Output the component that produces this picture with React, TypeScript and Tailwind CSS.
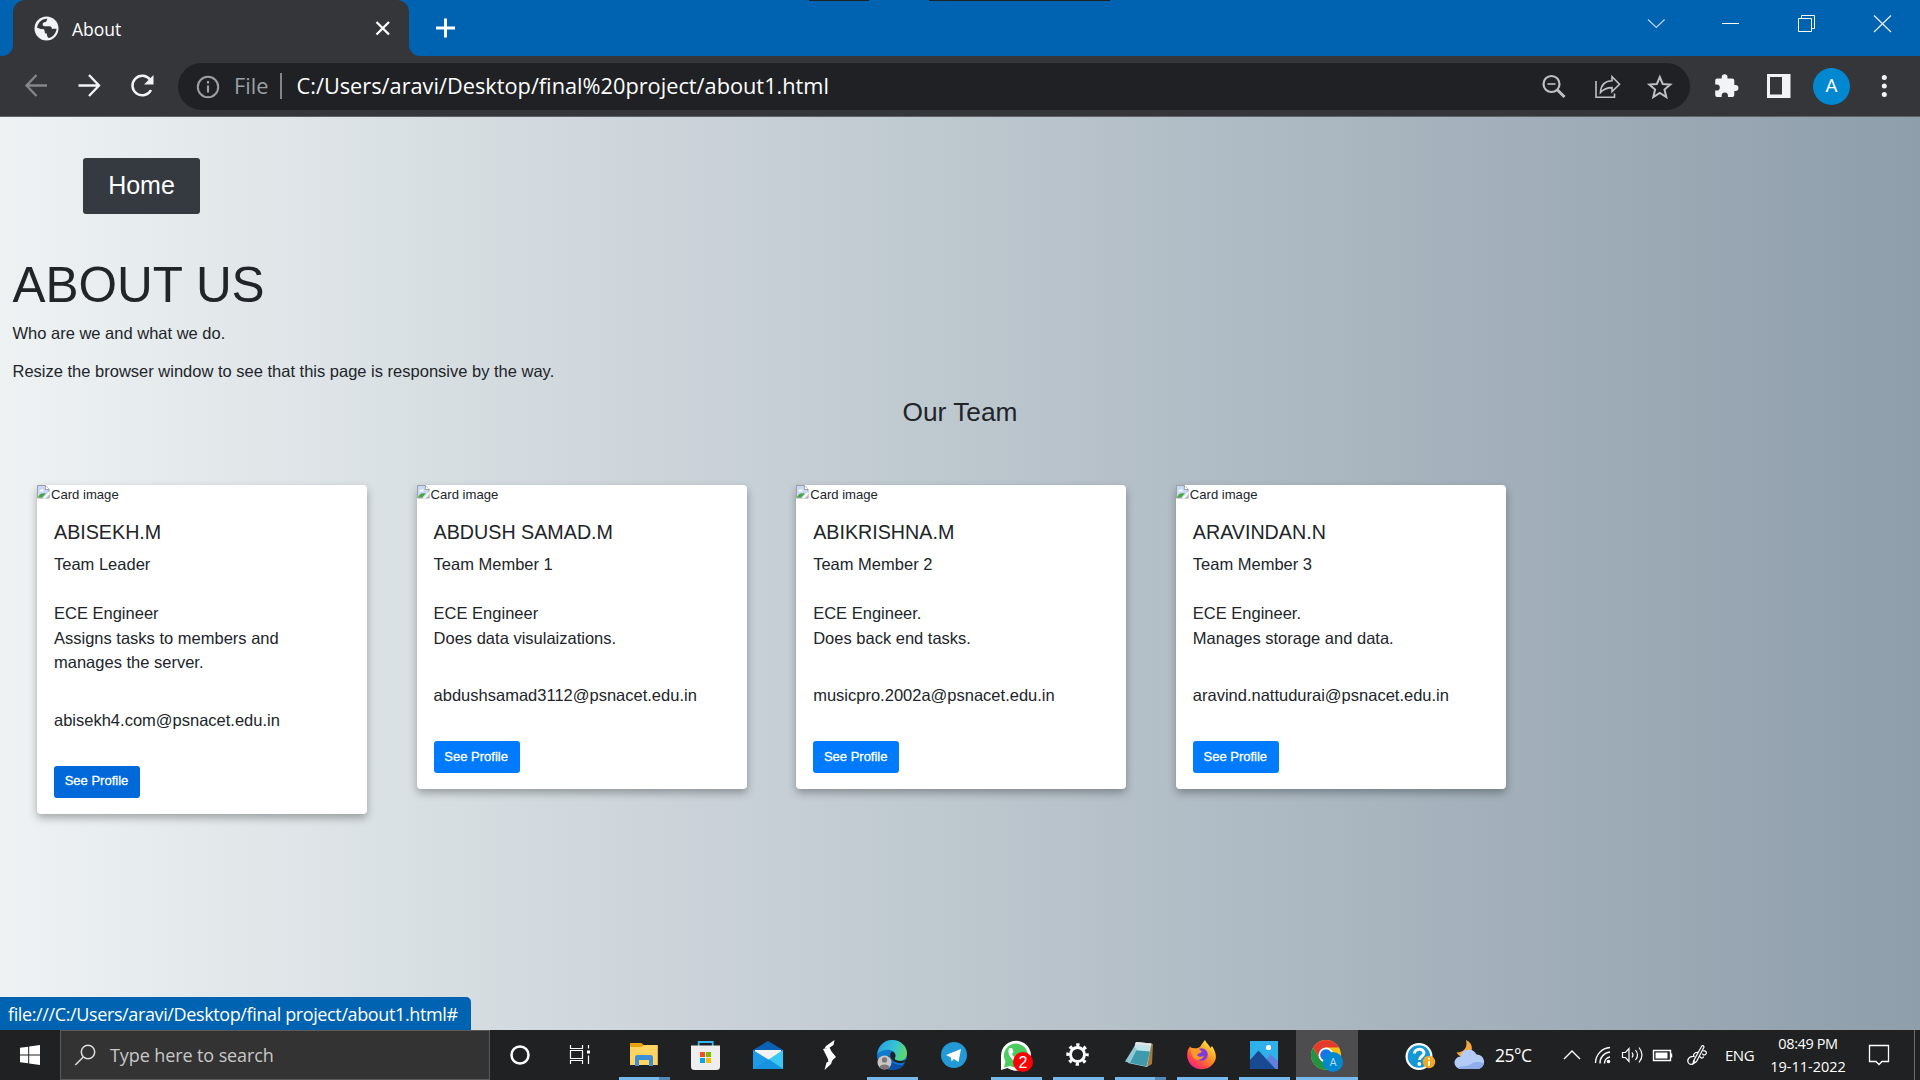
import React from "react";

type DrawProps = { x: number; y: number; w: number; h: number; children: React.ReactNode };

/* Drawing whose units are window pixels, cropped to its own cell. */
function Draw({ x, y, w, h, children }: DrawProps) {
  return (
    <svg width={w} height={h} viewBox={`${x} ${y} ${w} ${h}`} fill="none" className="block shrink-0">
      {children}
    </svg>
  );
}

function TabStrip() {
  return (
    <div className="relative flex h-14 shrink-0 bg-[#0063b1]">
      <div className="w-[13px] bg-[#35363a]">
        <div className="h-14 rounded-br-[11px] bg-[#0063b1]" />
      </div>
      <div className="flex w-[396px] items-center rounded-t-[12px] bg-[#35363a] pl-[20px]">
        <Draw x={33} y={15} w={27} h={27}>
          <circle cx="46.500" cy="28.500" r="12" fill="#f1f3f4" />
          <path d="M47.500 18.700c-1.200 1.400-.4 2.600-2 3.300-1.800.6-2.800.4-2.800 2.200 0 1.600.8 2 2.600 2h4.200c1.800 0 2.400 1.400 2.400 2.800 1.600 0 2.800-.3 4.700-.2-.5 4.200-3.300 8.200-7.600 9.300-1.600-.3-2.100-1.700-2.100-3v-1.500c-1.900 0-2.700-1.100-2.700-2.700v-1.600l-7.200-.6c.2-5.600 4.600-10.300 10.500-10z" fill="#35363a" />
          <path d="M37 28.400c1.800 1.500 5.500 1 6.700 2.500.7 1.500-.3 2.600.8 3.600 1.500 1.200 2.400.5 2.400 3.500" stroke="#f1f3f4" strokeWidth="1.500" />
        </Draw>
        <span className="ml-[12px] w-[302px] pt-px font-['Open_Sans'] text-[17.500px] leading-6 text-white">About</span>
        <Draw x={374} y={19} w={18} h={18}>
          <path d="M376.500 22 389 34.500M389 22l-12.500 12.500" stroke="#fff" strokeWidth="2.300" />
        </Draw>
      </div>
      <div className="w-[13px] bg-[#35363a]">
        <div className="h-14 rounded-bl-[11px] bg-[#0063b1]" />
      </div>
      <div className="flex flex-1 items-center pl-[12px]">
        <Draw x={434} y={17} w={22} h={22}>
          <path d="M445.500 18.500v19M436 28h19" stroke="#fff" strokeWidth="3" />
        </Draw>
      </div>
      <Draw x={1640} y={0} w={280} h={56}>
        <path d="m1648 19.500 8.300 8 8.300-8" stroke="#b9d4ea" strokeWidth="1.200" />
        <path d="M1722 23.500h17" stroke="#fff" />
        <path d="M1798.500 18.500h13v13h-13zM1801.500 18.500v-3h13v13h-3" stroke="#fff" />
        <path d="m1874 15.500 17 16.500M1891 15.500 1874 32" stroke="#e8f1f8" strokeWidth="1.200" />
      </Draw>
      <div className="absolute left-[809px] top-0 h-px w-[60px] bg-[#202124]" />
      <div className="absolute left-[929px] top-0 h-px w-[181px] bg-[#202124]" />
    </div>
  );
}

function Toolbar() {
  return (
    <div className="flex h-[61px] shrink-0 items-center border-b border-[#5f6368] bg-[#35363a] font-['Open_Sans']">
      <Draw x={0} y={56} w={178} h={60}>
        <path d="M47 85.500H27M36.500 75 26.500 85.500l10 10.500" stroke="#85868a" strokeWidth="2.300" />
        <path d="M78.500 85.500h20M89 75 99 85.500 89 96" stroke="#f1f3f4" strokeWidth="2.400" />
        <path d="M150 79.500A9.800 9.800 0 1 0 151 90" stroke="#f1f3f4" strokeWidth="2.500" />
        <path d="M153.500 75v9.500H144z" fill="#f1f3f4" />
      </Draw>
      <div className="flex h-[47px] w-[1512px] items-center rounded-full bg-[#202124]">
        <Draw x={178} y={63} w={56} h={47}>
          <circle cx="208" cy="87" r="10.200" stroke="#9aa0a6" strokeWidth="2" />
          <path d="M208 85.500v7M208 81v2.400" stroke="#9aa0a6" strokeWidth="2.200" />
        </Draw>
        <span className="w-[46px] text-[21.750px] leading-7 text-[#9aa0a6]">File</span>
        <div className="h-[26px] w-[1.500px] bg-[#80868b]" />
        <span className="ml-[15px] flex-1 whitespace-nowrap text-[21.750px] leading-7 text-white">
          C:/Users/aravi/Desktop/final%20project/about1.html
        </span>
        <Draw x={1530} y={63} w={160} h={47}>
          <g stroke="#bdc1c6" strokeWidth="2.200">
            <circle cx="1551.500" cy="84" r="8" />
            <path d="M1547.500 84h8" strokeWidth="1.600" />
            <path d="m1557 89.500 7.500 7.500" strokeWidth="3" />
            <path d="M1596 81v16.200h18.500V93.500" strokeWidth="1.600" />
            <path d="M1600.500 92.500c.3-7 4-11.500 11.500-11.700v-4l7.500 7.500-7.500 7.300v-4c-5.500 0-8.500 1.500-11.500 4.900z" strokeWidth="1.600" />
            <path d="m1659.800 77 2.900 7 7.600.6-5.800 5 1.800 7.400-6.500-4-6.500 4 1.800-7.400-5.800-5 7.600-.6z" strokeWidth="2" />
          </g>
        </Draw>
      </div>
      <Draw x={1690} y={56} w={123} h={60}>
        <path d="M1716.800 78.500h4.900v-1.300a2.900 2.900 0 0 1 5.800 0v1.300h4.800a2 2 0 0 1 2 2v4.600h1.200a2.900 2.900 0 0 1 0 5.900h-1.200v4a2 2 0 0 1-2 2h-4.400v-1.500a3.100 3.100 0 0 0-6.200 0v1.500h-4.500a2 2 0 0 1-2-2v-4.400h1.500a3.100 3.100 0 0 0 0-6.200h-1.500v-3.900a2 2 0 0 1 1.600-2z" fill="#f1f3f4" />
        <path d="M1767 74h23.500v24H1767z" fill="#f1f3f4" />
        <path d="M1770 77h12v17.500h-12z" fill="#35363a" />
      </Draw>
      <div className="mr-[27px] flex size-[37px] items-center justify-center rounded-full bg-[#0288d1] pt-px font-['Roboto'] text-[19px] text-white">A</div>
      <Draw x={1877} y={56} w={14} h={60}>
        <circle cx="1884.300" cy="77.500" r="2.500" fill="#f1f3f4" />
        <circle cx="1884.300" cy="86" r="2.500" fill="#f1f3f4" />
        <circle cx="1884.300" cy="94.500" r="2.500" fill="#f1f3f4" />
      </Draw>
    </div>
  );
}

type Member = { name: string; role: string; field: string; duties: string[]; email: string; hovered?: boolean };

const members: Member[] = [
  { name: "ABISEKH.M", role: "Team Leader", field: "ECE Engineer", duties: ["Assigns tasks to members and", "manages the server."], email: "abisekh4.com@psnacet.edu.in", hovered: true },
  { name: "ABDUSH SAMAD.M", role: "Team Member 1", field: "ECE Engineer", duties: ["Does data visulaizations."], email: "abdushsamad3112@psnacet.edu.in" },
  { name: "ABIKRISHNA.M", role: "Team Member 2", field: "ECE Engineer.", duties: ["Does back end tasks."], email: "musicpro.2002a@psnacet.edu.in" },
  { name: "ARAVINDAN.N", role: "Team Member 3", field: "ECE Engineer.", duties: ["Manages storage and data."], email: "aravind.nattudurai@psnacet.edu.in" },
];

function BrokenImage() {
  return (
    <svg width="13" height="14" viewBox="0 0 14 14" preserveAspectRatio="none" className="block shrink-0">
      <path d="M.5.500h8.500l4 4v8.500H.5z" fill="#c6d9f7" stroke="#9a9a9a" />
      <path d="M2.500 6.500c0-1.500 1.500-2 2-1.500.5-1.300 2.500-1 2.500.5v1z" fill="#fff" />
      <path d="M1 12.500c1.500-3.500 4-5 8.500-4l-4 4z" fill="#4aa63c" />
      <path d="M6 13.500 13.500 6v3L9 13.500z" fill="#fff" />
      <path d="M9 .5v4h4" fill="#fff" stroke="#9a9a9a" />
    </svg>
  );
}

function MemberCard({ member }: { member: Member }) {
  return (
    <div className="w-[330px] rounded-[4px] bg-white pb-[16px] shadow-[0_4px_8px_rgba(0,0,0,0.3)]">
      <div className="flex h-[20px]">
        <BrokenImage />
        <span className="pl-px text-[13.100px] leading-[19px]">Card image</span>
      </div>
      <div className="px-[17px] pt-[15px]">
        <h4 className="text-[19.700px] leading-6">{member.name}</h4>
        <p className="mt-[8px] text-[16.500px] leading-[24.650px]">{member.role}</p>
        <p className="mt-[24.650px] text-[16.500px] leading-[24.650px]">{member.field}</p>
        {member.duties.map((line) => (
          <p key={line} className="text-[16.500px] leading-[24.650px]">{line}</p>
        ))}
        <p className="mt-[33px] text-[16.500px] leading-[24.650px]">{member.email}</p>
        <button
          className={`mt-[33px] block h-[32px] w-[86px] rounded-[3px] pb-px pr-px text-[13px] text-white [-webkit-text-stroke:0.3px_white] ${member.hovered ? "bg-[#0069d9]" : "bg-[#007bff]"}`}
        >
          See Profile
        </button>
      </div>
    </div>
  );
}

function Page() {
  return (
    <main className="relative h-[913px] shrink-0 bg-linear-to-r from-[#eef2f3] to-[#8e9eab] font-['Liberation_Sans'] text-[#212529]">
      <div className="pl-[83px] pt-[41px]">
        <button className="block h-[56px] w-[117px] rounded-[3px] bg-[#343a40] text-[25px] text-white">Home</button>
      </div>
      <h1 className="mt-[41px] pl-[12.500px] text-[49.500px] leading-[60px]">ABOUT US</h1>
      <p className="mt-[6px] pl-[12.500px] text-[16.500px] leading-[24.650px]">Who are we and what we do.</p>
      <p className="mt-[13.500px] pl-[12.500px] text-[16.500px] leading-[24.650px]">
        Resize the browser window to see that this page is responsive by the way.
      </p>
      <h2 className="mt-[13px] text-center text-[26.300px] leading-[30px]">Our Team</h2>
      <div className="mt-[58px] flex items-start gap-[49.600px] pl-[37px]">
        {members.map((m) => (
          <MemberCard key={m.name} member={m} />
        ))}
      </div>
      <div className="absolute bottom-0 left-0 flex h-[33px] w-[471px] items-center whitespace-nowrap rounded-tr-[5px] bg-[#0063b1] pl-[8px] pt-px font-['Open_Sans'] text-[18px] tracking-[-0.380px] text-white">
        file:///C:/Users/aravi/Desktop/final project/about1.html#
      </div>
    </main>
  );
}

function TaskCell({ index, running, stacked, active, children }: { index: number; running?: boolean; stacked?: boolean; active?: boolean; children: React.ReactNode }) {
  const x = 490 + index * 62;
  return (
    <div className={`relative h-[50px] w-[62px] shrink-0 ${active ? "bg-[#4d4d4f]" : ""}`}>
      <Draw x={x} y={1030} w={62} h={50}>
        {children}
        {running && !active && <rect x={x + 5} y="1077" width="51" height="3" fill="#76b9ed" />}
        {stacked && <rect x={x + 45} y="1077" width="11" height="3" fill="#5588b4" />}
        {active && <rect x={x} y="1077" width="62" height="3" fill="#76b9ed" />}
      </Draw>
    </div>
  );
}

function Taskbar() {
  return (
    <footer className="flex h-[50px] shrink-0 bg-[#202122] font-['Open_Sans'] text-white">
      <Draw x={0} y={1030} w={60} h={50}>
        <path d="m20 1047.800 8.200-1.100v7.800H20zM29.200 1046.500l10.800-1.500v9.500H29.200zM20 1055.500h8.200v7.800l-8.200-1.100zM29.200 1055.500H40v9.500l-10.800-1.500z" fill="#fff" />
      </Draw>
      <div className="flex h-[50px] w-[430px] items-center border border-[#5a5a5a] bg-[#333]">
        <Draw x={61} y={1031} w={49} h={48}>
          <circle cx="88" cy="1052" r="6.700" stroke="#ddd" strokeWidth="1.500" />
          <path d="m83.300 1057-8 8" stroke="#ddd" strokeWidth="1.500" />
        </Draw>
        <span className="text-[18px] tracking-[-0.1px] text-[#c8c8c8]">Type here to search</span>
      </div>
      <TaskCell index={0}>
        <circle cx="520" cy="1055" r="8.500" stroke="#fff" strokeWidth="2.500" />
      </TaskCell>
      <TaskCell index={1}>
        <path d="M570.500 1045v3.500h12V1045M570.500 1064v-3.500h12v3.500M570.500 1050.500h12v8h-12zM588.500 1045v3.500M588.500 1055.500v8.500" stroke="#fff" strokeWidth="1.200" />
        <path d="M587 1050.500h3v3h-3z" fill="#fff" />
      </TaskCell>
      <TaskCell index={2} running stacked>
        <path d="M630 1043h11.500l2 2h14v20H630z" fill="#e8a30c" />
        <path d="M630 1047h11.500l2.500-2h13.700v20H630z" fill="#ffd463" />
        <path d="M635 1066v-8.500a2.500 2.500 0 0 1 2.500-2.500h13a2.500 2.500 0 0 1 2.500 2.500v8.500h-4v-6h-10v6z" fill="#3c8fd4" />
      </TaskCell>
      <TaskCell index={3}>
        <path d="M698.700 1047v-5h14v5" stroke="#38b6f0" strokeWidth="1.800" />
        <path d="M691 1045.500h29v21a3.500 3.500 0 0 1-3.500 3.500h-22a3.500 3.500 0 0 1-3.500-3.500z" fill="#eee" />
        <path d="M700 1052h5v5h-5z" fill="#f25022" />
        <path d="M706 1052h5v5h-5z" fill="#7fba00" />
        <path d="M700 1058h5v5h-5z" fill="#00a4ef" />
        <path d="M706 1058h5v5h-5z" fill="#ffb900" />
      </TaskCell>
      <TaskCell index={4}>
        <path d="m753 1050 15-9 15 9v5h-30z" fill="#0b62b5" />
        <path d="M755 1050h26v10h-26z" fill="#f2f2f2" />
        <path d="m753 1050 30 18.500V1069h-30z" fill="#1f9ae6" />
        <path d="M783 1050v19l-14.500-9.500z" fill="#3cc8f4" />
        <path d="m753 1069 15.500-9.500L783 1069z" fill="#1793e0" />
      </TaskCell>
      <TaskCell index={5}>
        <path d="m834.500 1040-8.500 6-1.500 2.500 4.500-.5 4.500-3z" fill="#fff" />
        <path d="m823 1049 6.500-1.500 2 4 4.500 5.500-7.500 6.500-.5-4.500z" fill="#fff" />
        <path d="m824.500 1070 2-7.500 3.500-1.500 3-2.500-2 5.500z" fill="#fff" />
      </TaskCell>
      <TaskCell index={6} running>
        <defs>
          <linearGradient id="edgeTop" x1="877" y1="1045" x2="907" y2="1058" gradientUnits="userSpaceOnUse">
            <stop stopColor="#279fdd" />
            <stop offset="0.5" stopColor="#35c3d6" />
            <stop offset="1" stopColor="#66dc52" />
          </linearGradient>
        </defs>
        <circle cx="892" cy="1055" r="15" fill="#1278cd" />
        <path d="M877.500 1054c.7-8 7-14 14.500-14 8.500 0 15 6 15 13 0 5-3.500 8-8 8-3.500 0-5-1.500-4-3 1.500-2.500.5-7-5-8-5-.8-10 1.500-12.500 4z" fill="url(#edgeTop)" />
        <path d="M889.500 1055c0 6 5 10 11 10 2 0 3.500-.4 4.500-1-3 4.500-8 6-13 6-6-1-8-9-2.500-15z" fill="#0d4ea6" />
        <path d="M892 1051.500c-3 2.500-2.500 8.500 4.500 11 4 1.300 8 .5 10-1.500v3l1.500 3v-8c-3 2-8 2.500-10.500 1.500-2.500-.7-3.500-1.700-2.500-3 1.200-2 0-5-3-6z" fill="#202122" />
        <circle cx="884.500" cy="1062.500" r="7" fill="#c9c5c2" />
        <circle cx="884.500" cy="1060" r="2.700" fill="#7c7774" />
        <path d="M879.500 1067c.5-3.500 9.500-3.500 10 0-2.500 3-7.500 3-10 0z" fill="#7c7774" />
      </TaskCell>
      <TaskCell index={7}>
        <circle cx="954" cy="1055" r="13" fill="#2399d6" />
        <path d="m946 1055 15-6-2.500 13-4.500-3-2.500 2.500-.5-4z" fill="#fff" />
      </TaskCell>
      <TaskCell index={8} running>
        <path d="M1001 1070v-14a15 15 0 1 1 6.500 12z" fill="#fff" />
        <path d="m1004 1067.500 1.500-6a12 12 0 1 1 4.500 4.500z" fill="#4ccb5f" />
        <path d="M1009 1048.500c-2.500 5 3 14 11 14l2-3-3.500-2.500-2 1.500c-2-1-3.500-2.500-4.500-4.500l1.500-2-1.500-4z" fill="#fff" />
        <circle cx="1023" cy="1062" r="10" fill="#f00" />
        <text x="1023" y="1067.500" fill="#fff" fontSize="16" textAnchor="middle" fontFamily="Liberation Sans">2</text>
      </TaskCell>
      <TaskCell index={9} running>
        <circle cx="1077.500" cy="1054.500" r="7" stroke="#fff" strokeWidth="3" />
        <circle cx="1077.500" cy="1054.500" r="9.600" stroke="#fff" strokeWidth="3.200" strokeDasharray="3.300 4.240" strokeDashoffset="1.600" />
      </TaskCell>
      <TaskCell index={10} running stacked>
        <path d="m1136 1042 17 2-1 20-5 3z" fill="#a8793f" />
        <path d="m1136 1042 15.500 1.500-4.500 23.500-19-4z" fill="#bfe3ea" />
        <path d="m1133 1050 17 1.500-3.500 15-18.500-4z" fill="#3f9bab" />
        <path d="m1134 1047-9 14.500 5 1.500 7-14z" fill="#8fc9d4" />
        <path d="m1136 1042 15.500 1.500-.6 2.500-16-1.500z" fill="#e4e4e4" />
      </TaskCell>
      <TaskCell index={11} running>
        <defs>
          <linearGradient id="fox" x1="1212" y1="1042" x2="1192" y2="1068" gradientUnits="userSpaceOnUse">
            <stop stopColor="#fff04a" />
            <stop offset="0.4" stopColor="#ff9a1f" />
            <stop offset="0.75" stopColor="#ff4a4a" />
            <stop offset="1" stopColor="#f0208c" />
          </linearGradient>
        </defs>
        <path d="M1190 1046.500c1.500 1.500 3 2.200 6 2l4-1.500c1.500-2 3-5 5-7 1 3 4 4.500 5.500 8l1.500-2c4.500 7 5.500 13 1 18-5 6.500-16 7-22 1-4-4-4.500-11-3-15.500z" fill="url(#fox)" />
        <circle cx="1201.500" cy="1054.500" r="6.300" fill="#7a3be0" />
        <path d="M1190 1048c4-.5 7 1 9 1l3 2.500c-1 2-4 1.500-5 3.500 1 2 4 2.500 7 .5-1 4-6 5.500-9 3.500-3-2-4-6-5-11z" fill="#ff9a28" />
      </TaskCell>
      <TaskCell index={12} running>
        <path d="M1250 1041h28v28h-28z" fill="#2fb0ea" />
        <path d="m1266 1061 4-7 8 7v8h-12z" fill="#5f80dc" />
        <path d="m1250 1060 8.500-9.500 17 18.500H1250z" fill="#174a92" />
        <circle cx="1268.500" cy="1047.500" r="2.600" fill="#fff" />
      </TaskCell>
      <TaskCell index={13} running active>
        <circle cx="1326" cy="1055" r="15" fill="#fbc116" />
        <path d="M1313 1047.500a15 15 0 0 1 26 0h-13l-6.500 11.300z" fill="#e33b2e" />
        <path d="M1313 1047.500a15 15 0 0 0 13 22.500l6.500-11.300h-13z" fill="#229342" />
        <circle cx="1326" cy="1055" r="7.500" fill="#fff" />
        <circle cx="1326" cy="1055" r="5.800" fill="#1a73e8" />
        <circle cx="1333" cy="1062" r="10" fill="#0288d1" />
        <text x="1333" y="1066" fill="#b8def2" fontSize="11" textAnchor="middle" fontFamily="Roboto">A</text>
      </TaskCell>
      <Draw x={1358} y={1030} w={137} h={50}>
        <circle cx="1419" cy="1056.500" r="13.500" fill="#fff" />
        <circle cx="1419" cy="1056.500" r="11.300" fill="#1397d5" />
        <path d="M1414.500 1053.500c0-5.500 9.500-5.500 9.500-.5 0 3.500-4.500 3-4.500 7" stroke="#fff" strokeWidth="3" />
        <circle cx="1419.300" cy="1064" r="1.900" fill="#fff" />
        <circle cx="1429" cy="1062" r="6.200" fill="#f2a922" />
        <path d="M1429 1061v5M1429 1057.800v2" stroke="#fff" strokeWidth="1.800" />
        <path d="M1466 1040c8 3.500 7.500 13 1 16-4 2-8.500.5-10.500-3.500 7.500 0 11.500-5 9.500-12.500z" fill="#f3a93a" />
        <path d="M1461 1069a6 6 0 0 1-.5-12.500 8.500 8.500 0 0 1 16-2 7.300 7.300 0 0 1 1.500 14.500z" fill="#b3ccf6" />
        <path d="M1458 1068c4-3 9-1 13-4s9-2 13-1c-1 4-3.500 6-6.500 6H1461c-1.200 0-2.200-.4-3-1z" fill="#8eadea" />
      </Draw>
      <span className="w-[60px] self-center whitespace-nowrap text-[17.500px] tracking-[-0.5px]">25°C</span>
      <Draw x={1555} y={1030} w={170} h={50}>
        <g stroke="#fff" strokeWidth="1.400">
          <path d="m1564 1059 8-8 8 8" />
          <path d="M1595.500 1063a15.500 15.500 0 0 1 14.500-15.500M1600 1063.500a11 11 0 0 1 10-11.500M1604.500 1063.500a6.500 6.500 0 0 1 5.500-6.500" />
          <path d="M1622.500 1052.500h3l3.500-4v13l-3.500-4h-3zM1632 1052.500q2 2.500 0 5M1635.500 1050q4 5 0 10M1639 1047.500q6 7.500 0 15" strokeWidth="1.200" />
          <path d="M1653.500 1050.500h17v10h-17zM1671.500 1053.500v4" />
          <path d="m1693.500 1061 8-14.500c1-1.500 3-.5 2.300 1l-7.300 14-3.500 2.500zM1698 1052.500c-4-.5-5.500 3-3.500 4.500M1694 1056.500c-5-.5-7.500 3.500-5.500 6.500 2 2.500 6 1 6-2.500M1703 1051c3-1 4.500 2 2.500 3.500-1.500 1-3 .2-3-1M1700 1056.500c1 2.500 3.500 1.500 3.500 0" strokeWidth="1.200" />
        </g>
        <circle cx="1608.500" cy="1061.500" r="1.800" fill="#fff" />
        <path d="M1655.500 1052.500h12v6h-12z" fill="#fff" />
      </Draw>
      <span className="w-[43px] self-center text-[15px] tracking-[-0.5px]">ENG</span>
      <div className="flex w-[80px] flex-col items-center justify-center gap-[3px] whitespace-nowrap text-[14.500px] leading-[20px]">
        <span className="tracking-[-0.4px]">08:49 PM</span>
        <span>19-11-2022</span>
      </div>
      <Draw x={1848} y={1030} w={72} h={50}>
        <path d="M1869.500 1045.500h19v16h-6.500l-3 3-3-3h-6.500z" stroke="#fff" strokeWidth="1.300" />
        <path d="M1914.500 1030v50" stroke="#6b6b6b" />
      </Draw>
    </footer>
  );
}

export default function App() {
  return (
    <div className="flex h-[1080px] w-[1920px] flex-col overflow-hidden">
      <TabStrip />
      <Toolbar />
      <Page />
      <Taskbar />
    </div>
  );
}
